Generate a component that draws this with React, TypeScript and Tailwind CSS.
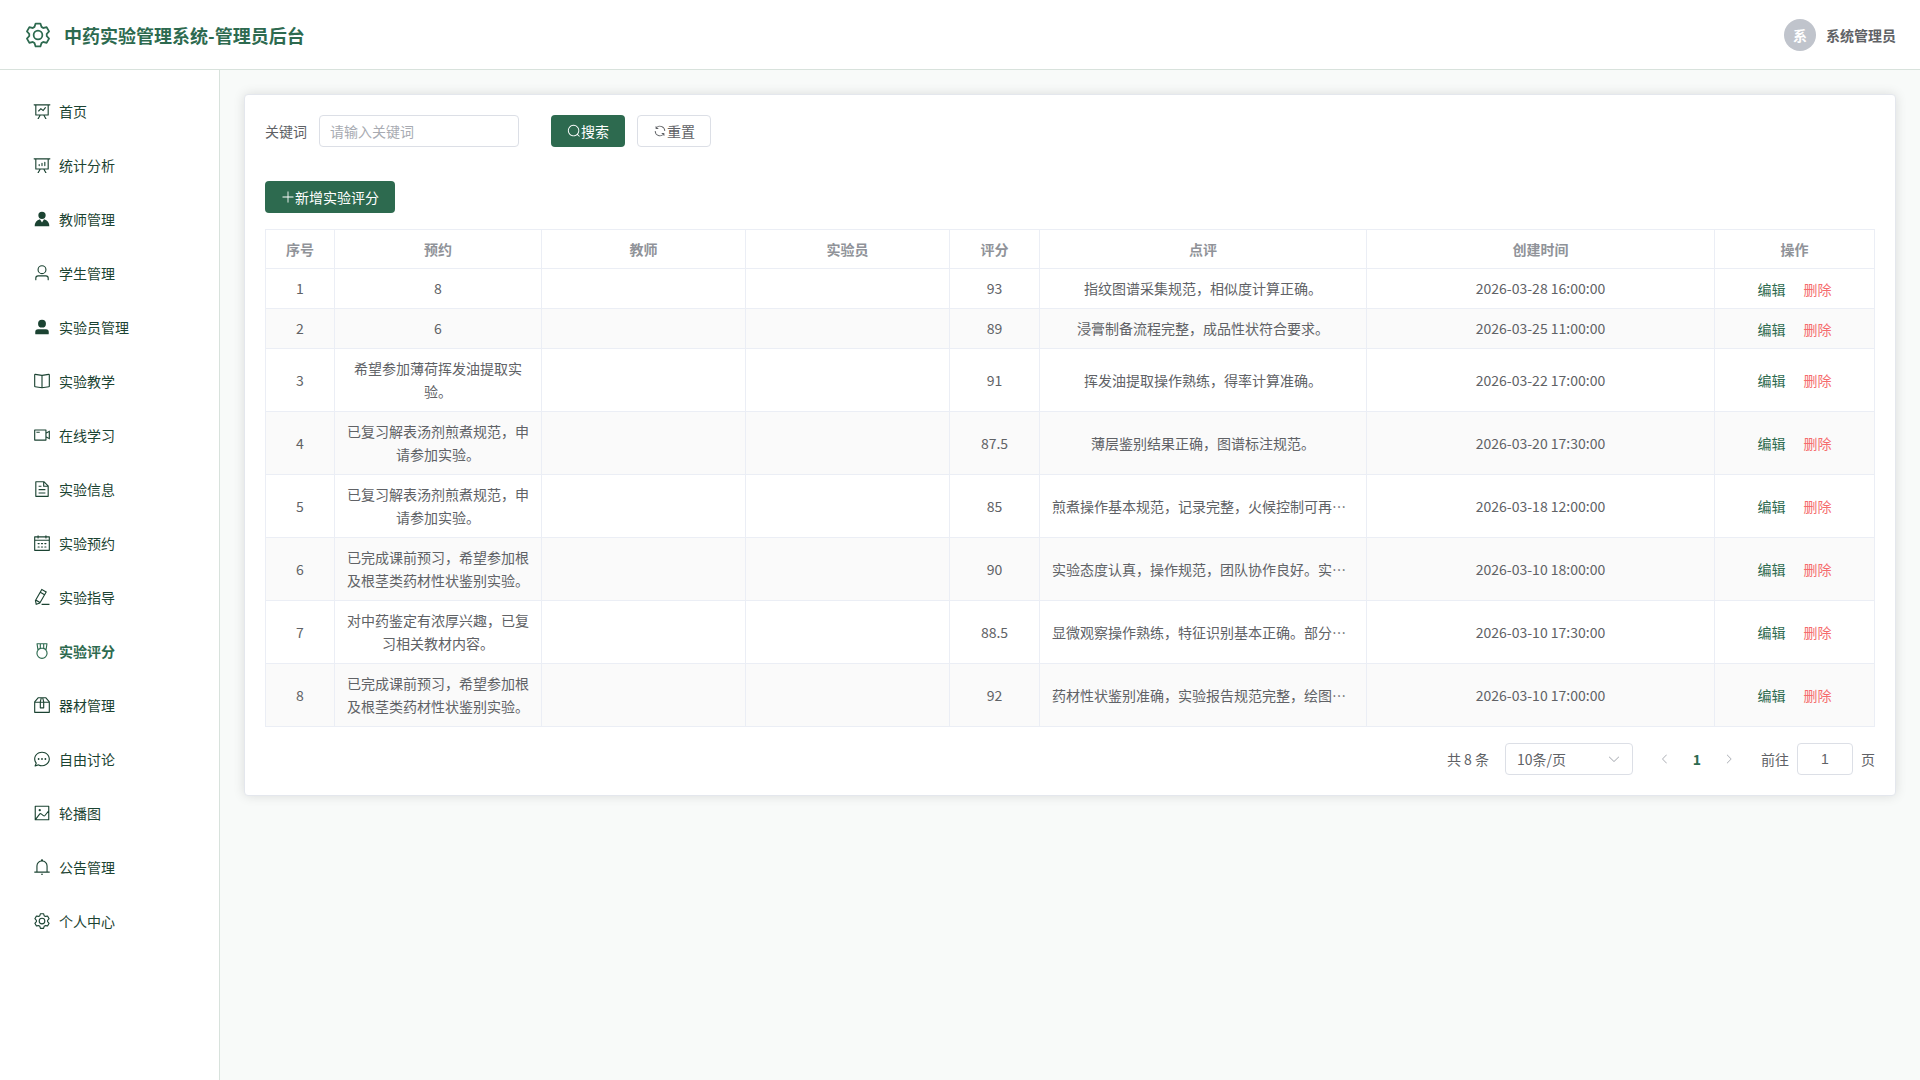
import React from "react";

const icons = {
  dataLine:
    "M359.168 768H160a32 32 0 0 1-32-32V192H64a32 32 0 0 1 0-64h896a32 32 0 1 1 0 64h-64v544a32 32 0 0 1-32 32H665.216l110.848 192h-73.856L591.36 768H433.024L322.176 960H248.32zM832 192H192v512h640zM342.656 534.656a32 32 0 1 1-45.312-45.312L444.992 341.76l125.44 94.08L679.04 300.032a32 32 0 1 1 49.92 39.936L581.632 524.224 451.008 426.24 342.656 534.592z",
  dataAnalysis:
    "m665.216 768 110.848 192h-73.856L591.36 768H433.024L322.176 960H248.32l110.848-192H160a32 32 0 0 1-32-32V192H64a32 32 0 0 1 0-64h896a32 32 0 1 1 0 64h-64v544a32 32 0 0 1-32 32zM832 192H192v512h640zM352 448a32 32 0 0 1 32 32v64a32 32 0 0 1-64 0v-64a32 32 0 0 1 32-32m160-64a32 32 0 0 1 32 32v128a32 32 0 0 1-64 0V416a32 32 0 0 1 32-32m160-64a32 32 0 0 1 32 32v192a32 32 0 1 1-64 0V352a32 32 0 0 1 32-32",
  avatar:
    "M628.736 528.896A416 416 0 0 1 928 928H96a415.872 415.872 0 0 1 299.264-399.104L512 704zM720 304a208 208 0 1 1-416 0 208 208 0 0 1 416 0",
  user: "M512 512a192 192 0 1 0 0-384 192 192 0 0 0 0 384m0 64a256 256 0 1 1 0-512 256 256 0 0 1 0 512m320 320v-96a96 96 0 0 0-96-96H288a96 96 0 0 0-96 96v96a32 32 0 1 1-64 0v-96a160 160 0 0 1 160-160h448a160 160 0 0 1 160 160v96a32 32 0 1 1-64 0",
  userFilled:
    "M288 320a224 224 0 1 0 448 0 224 224 0 1 0-448 0m544 608H160a32 32 0 0 1-32-32v-96a160 160 0 0 1 160-160h448a160 160 0 0 1 160 160v96a32 32 0 0 1-32 32z",
  reading:
    "m512 863.36 384-54.848v-638.72L525.568 222.72a96 96 0 0 1-27.136 0L128 169.792v638.72zM137.024 106.432l370.432 52.928a32 32 0 0 0 9.088 0l370.432-52.928A64 64 0 0 1 960 169.792v638.72a64 64 0 0 1-54.976 63.36l-388.48 55.488a32 32 0 0 1-9.088 0l-388.48-55.488A64 64 0 0 1 64 808.512v-638.72a64 64 0 0 1 73.024-63.36M480 192h64v704h-64z",
  videoCamera:
    "M704 768V256H128v512zm64-416 192-96v512l-192-96v128a32 32 0 0 1-32 32H96a32 32 0 0 1-32-32V224a32 32 0 0 1 32-32h640a32 32 0 0 1 32 32zm0 71.552v176.896l128 64V359.552zM192 320h192v64H192z",
  document:
    "M832 384H576V128H192v768h640zm-26.496-64L640 154.496V320zM160 64h480l256 256v608a32 32 0 0 1-32 32H160a32 32 0 0 1-32-32V96a32 32 0 0 1 32-32m160 448h384v64H320zm0-192h160v64H320zm0 384h384v64H320z",
  calendar:
    "M128 384v512h768V192H768v32a32 32 0 1 1-64 0v-32H320v32a32 32 0 0 1-64 0v-32H128v128h768v64zm192-256h384V96a32 32 0 1 1 64 0v32h160a32 32 0 0 1 32 32v768a32 32 0 0 1-32 32H96a32 32 0 0 1-32-32V160a32 32 0 0 1 32-32h160V96a32 32 0 0 1 64 0zm-32 384h64a32 32 0 0 1 0 64h-64a32 32 0 0 1 0-64m0 192h64a32 32 0 1 1 0 64h-64a32 32 0 1 1 0-64m192-192h64a32 32 0 0 1 0 64h-64a32 32 0 0 1 0-64m0 192h64a32 32 0 1 1 0 64h-64a32 32 0 1 1 0-64m192-192h64a32 32 0 1 1 0 64h-64a32 32 0 1 1 0-64m0 192h64a32 32 0 1 1 0 64h-64a32 32 0 1 1 0-64",
  editPen:
    "m199.04 672.64 193.984 112 224-387.968-193.92-112-224 388.032zm-23.872 60.16 32.896 148.288 144.896-45.696zM455.04 229.248l193.92 112 56.704-98.112-193.984-112zM104.32 708.8l384-665.024 304.768 175.936L409.152 884.8h.064l-248.448 78.336zm384 254.272v-64h448v64z",
  medal:
    "M512 896a256 256 0 1 0 0-512 256 256 0 0 0 0 512m0 64a320 320 0 1 1 0-640 320 320 0 0 1 0 640M576 128H448v200a286.72 286.72 0 0 1 64-8c19.52 0 40.832 2.688 64 8zm64 0v219.648c24.448 9.088 50.56 20.416 78.4 33.92L757.44 128zm-256 0H266.624l39.04 253.568c27.84-13.504 53.888-24.832 78.336-33.92V128zM229.312 64h565.376a32 32 0 0 1 31.616 36.864L768 480c-113.792-64-199.104-96-256-96-56.896 0-142.208 32-256 96l-58.304-379.136A32 32 0 0 1 229.312 64",
  box: "M317.056 128 128 344.064V896h768V344.064L706.944 128zm-14.528-64h418.944a32 32 0 0 1 24.064 10.88l206.528 236.096A32 32 0 0 1 960 332.032V928a32 32 0 0 1-32 32H96a32 32 0 0 1-32-32V332.032a32 32 0 0 1 7.936-21.12L278.4 75.008A32 32 0 0 1 302.528 64M64 320h896v64H64zM448 327.872V640h128V327.872L526.08 128h-28.16zM448 64h128l64 256v352a32 32 0 0 1-32 32H416a32 32 0 0 1-32-32V320z",
  chat: "m174.72 855.68 135.296-45.12 23.68 11.84C388.096 849.536 448.576 864 512 864c211.84 0 384-166.784 384-352S723.84 160 512 160 128 326.784 128 512c0 69.12 24.96 139.264 70.848 199.232l22.08 28.8-46.272 115.584zm-45.248 82.56A32 32 0 0 1 89.6 896l58.368-145.92C94.72 680.32 64 596.864 64 512 64 299.904 256 96 512 96s448 203.904 448 416-192 416-448 416a461.056 461.056 0 0 1-206.912-48.384l-175.616 58.56zM512 563.2a51.2 51.2 0 1 1 0-102.4 51.2 51.2 0 0 1 0 102.4m192 0a51.2 51.2 0 1 1 0-102.4 51.2 51.2 0 0 1 0 102.4m-384 0a51.2 51.2 0 1 1 0-102.4 51.2 51.2 0 0 1 0 102.4",
  picture:
    "M160 160v704h704V160zm-32-64h768a32 32 0 0 1 32 32v768a32 32 0 0 1-32 32H128a32 32 0 0 1-32-32V128a32 32 0 0 1 32-32M384 288q64 0 64 64t-64 64q-64 0-64-64t64-64M185.408 876.992l-50.816-38.912L350.72 556.032a96 96 0 0 1 134.592-17.856l1.856 1.472 122.88 99.136a32 32 0 0 0 44.992-4.864l216-269.888 49.92 39.936-215.808 269.824-.256.32a96 96 0 0 1-135.04 14.464l-122.88-99.072-.64-.512a32 32 0 0 0-44.8 5.952z",
  bell: "M512 64a64 64 0 0 1 64 64v64H448v-64a64 64 0 0 1 64-64M256 768h512V448a256 256 0 1 0-512 0zm256-640a320 320 0 0 1 320 320v384H192V448a320 320 0 0 1 320-320M96 768h832q32 0 32 32t-32 32H96q-32 0-32-32t32-32m352 128h128a64 64 0 0 1-128 0",
  setting:
    "M600.704 64a32 32 0 0 1 30.464 22.208l35.2 109.376c14.784 7.232 28.928 15.36 42.432 24.512l112.384-24.192a32 32 0 0 1 34.432 15.36L944.32 364.8a32 32 0 0 1-4.032 37.504l-77.12 85.12a357.12 357.12 0 0 1 0 49.024l77.12 85.248a32 32 0 0 1 4.032 37.504l-88.704 153.6a32 32 0 0 1-34.432 15.296L708.8 803.904c-13.44 9.088-27.648 17.28-42.368 24.512l-35.264 109.376A32 32 0 0 1 600.704 960H423.296a32 32 0 0 1-30.464-22.208L357.696 828.48a351.616 351.616 0 0 1-42.56-24.64l-112.32 24.256a32 32 0 0 1-34.432-15.36L79.68 659.2a32 32 0 0 1 4.032-37.504l77.12-85.248a357.12 357.12 0 0 1 0-48.896l-77.12-85.248A32 32 0 0 1 79.68 364.8l88.704-153.6a32 32 0 0 1 34.432-15.296l112.32 24.256c13.568-9.152 27.776-17.408 42.56-24.64l35.2-109.312A32 32 0 0 1 423.232 64H600.64zm-23.424 64H446.72l-36.352 113.088-24.512 11.968a294.113 294.113 0 0 0-34.816 20.096l-22.656 15.36-116.224-25.088-65.28 113.152 79.68 88.192-1.92 27.136a293.12 293.12 0 0 0 0 40.192l1.92 27.136-79.808 88.192 65.344 113.152 116.224-25.024 22.656 15.296a294.113 294.113 0 0 0 34.816 20.096l24.512 11.968L446.72 896h130.688l36.48-113.152 24.448-11.904a288.282 288.282 0 0 0 34.752-20.096l22.592-15.296 116.288 25.024 65.28-113.152-79.744-88.192 1.92-27.136a293.12 293.12 0 0 0 0-40.256l-1.92-27.136 79.808-88.128-65.344-113.152-116.288 24.96-22.592-15.232a287.616 287.616 0 0 0-34.752-20.096l-24.448-11.904L577.344 128zM512 320a192 192 0 1 1 0 384 192 192 0 0 1 0-384m0 64a128 128 0 1 0 0 256 128 128 0 0 0 0-256",
  search:
    "m795.904 750.72 124.992 124.928a32 32 0 0 1-45.248 45.248L750.656 795.904a416 416 0 1 1 45.248-45.248zM480 832a352 352 0 1 0 0-704 352 352 0 0 0 0 704",
  refresh:
    "M771.776 794.88A384 384 0 0 1 128 512h64a320 320 0 0 0 555.712 216.448H654.72a32 32 0 1 1 0-64h149.056a32 32 0 0 1 32 32v148.928a32 32 0 1 1-64 0v-50.56zM276.288 295.616h92.992a32 32 0 0 1 0 64H220.16a32 32 0 0 1-32-32V178.56a32 32 0 0 1 64 0v50.56A384 384 0 0 1 896.128 512h-64a320 320 0 0 0-555.776-216.384z",
  plus: "M480 480V128a32 32 0 0 1 64 0v352h352a32 32 0 1 1 0 64H544v352a32 32 0 1 1-64 0V544H128a32 32 0 0 1 0-64z",
  arrowDown:
    "M831.872 340.864 512 652.672 192.128 340.864a30.592 30.592 0 0 0-42.752 0 29.12 29.12 0 0 0 0 41.6L489.664 714.24a32 32 0 0 0 44.672 0l340.288-331.712a29.12 29.12 0 0 0 0-41.728 30.592 30.592 0 0 0-42.752 0z",
  arrowLeft:
    "M609.408 149.376 277.76 489.6a32 32 0 0 0 0 44.672l331.648 340.352a29.12 29.12 0 0 0 41.728 0 30.592 30.592 0 0 0 0-42.752L339.264 511.936l311.872-319.872a30.592 30.592 0 0 0 0-42.688 29.12 29.12 0 0 0-41.728 0z",
  arrowRight:
    "M340.864 149.312a30.592 30.592 0 0 0 0 42.752L652.736 512 340.864 831.872a30.592 30.592 0 0 0 0 42.752 29.12 29.12 0 0 0 41.728 0L714.24 534.336a32 32 0 0 0 0-44.672L382.592 149.376a29.12 29.12 0 0 0-41.728 0z",
};

type IconName = keyof typeof icons;

const Icon = ({ name, className }: { name: IconName; className: string }) => (
  <svg viewBox="0 0 1024 1024" fill="currentColor" className={className} aria-hidden="true">
    <path d={icons[name]} />
  </svg>
);

const menu: { label: string; icon: IconName }[] = [
  { label: "首页", icon: "dataLine" },
  { label: "统计分析", icon: "dataAnalysis" },
  { label: "教师管理", icon: "avatar" },
  { label: "学生管理", icon: "user" },
  { label: "实验员管理", icon: "userFilled" },
  { label: "实验教学", icon: "reading" },
  { label: "在线学习", icon: "videoCamera" },
  { label: "实验信息", icon: "document" },
  { label: "实验预约", icon: "calendar" },
  { label: "实验指导", icon: "editPen" },
  { label: "实验评分", icon: "medal" },
  { label: "器材管理", icon: "box" },
  { label: "自由讨论", icon: "chat" },
  { label: "轮播图", icon: "picture" },
  { label: "公告管理", icon: "bell" },
  { label: "个人中心", icon: "setting" },
];

const rows = [
  { booking: "8", score: "93", comment: "指纹图谱采集规范，相似度计算正确。", time: "2026-03-28 16:00:00" },
  { booking: "6", score: "89", comment: "浸膏制备流程完整，成品性状符合要求。", time: "2026-03-25 11:00:00" },
  { booking: "希望参加薄荷挥发油提取实验。", score: "91", comment: "挥发油提取操作熟练，得率计算准确。", time: "2026-03-22 17:00:00" },
  { booking: "已复习解表汤剂煎煮规范，申请参加实验。", score: "87.5", comment: "薄层鉴别结果正确，图谱标注规范。", time: "2026-03-20 17:30:00" },
  { booking: "已复习解表汤剂煎煮规范，申请参加实验。", score: "85", comment: "煎煮操作基本规范，记录完整，火候控制可再精细。", time: "2026-03-18 12:00:00" },
  { booking: "已完成课前预习，希望参加根及根茎类药材性状鉴别实验。", score: "90", comment: "实验态度认真，操作规范，团队协作良好。实验记录完整。", time: "2026-03-10 18:00:00" },
  { booking: "对中药鉴定有浓厚兴趣，已复习相关教材内容。", score: "88.5", comment: "显微观察操作熟练，特征识别基本正确。部分描述需完善。", time: "2026-03-10 17:30:00" },
  { booking: "已完成课前预习，希望参加根及根茎类药材性状鉴别实验。", score: "92", comment: "药材性状鉴别准确，实验报告规范完整，绘图清晰。", time: "2026-03-10 17:00:00" },
];

const columns = ["序号", "预约", "教师", "实验员", "评分", "点评", "创建时间", "操作"];

const cell = "border-r border-b border-[#ebeef5] px-3 py-2";

const App: React.FC = () => {
  return (
    <div className="flex flex-col min-h-screen bg-[#f8faf9] text-sm text-[#606266] font-['Noto_Sans_CJK_SC',sans-serif]">
      {/* Header */}
      <header className="flex items-center justify-between h-[70px] px-6 bg-white border-b border-[#d8e2dc]">
        <div className="flex items-center gap-3 text-[#2d6a4f]">
          <Icon name="setting" className="w-7 h-7" />
          <h1 className="text-lg font-bold">中药实验管理系统-管理员后台</h1>
        </div>
        <div className="flex items-center gap-[10px] font-bold">
          <span className="flex items-center justify-center w-8 h-8 rounded-full bg-[#c0c4cc] text-white">
            系
          </span>
          <span>系统管理员</span>
        </div>
      </header>

      <div className="flex flex-1">
        {/* Sidebar */}
        <nav className="w-[220px] shrink-0 bg-white border-r border-[#d8e2dc] py-[14px]">
          <ul>
            {menu.map((item) => (
              <li key={item.label}>
                <a
                  href="#"
                  className={
                    item.label === "实验评分"
                      ? "flex items-center gap-2 h-[54px] pl-[33px] leading-[54px] font-bold text-[#2d6a4f]"
                      : "flex items-center gap-2 h-[54px] pl-[33px] leading-[54px] text-[#1b4332]"
                  }
                >
                  <Icon name={item.icon} className="w-[18px] h-[18px]" />
                  <span>{item.label}</span>
                </a>
              </li>
            ))}
          </ul>
        </nav>

        {/* Content */}
        <main className="flex-1 min-w-0 p-6">
          <div className="bg-white border border-[#e4e7ed] rounded shadow-[0_0_12px_rgba(0,0,0,0.12)] p-5">
            <form className="flex items-center">
              <label htmlFor="keyword" className="mr-3">
                关键词
              </label>
              <input
                id="keyword"
                type="text"
                placeholder="请输入关键词"
                className="w-[200px] h-8 mr-8 px-[10px] leading-[30px] border border-[#dcdfe6] rounded placeholder:text-[#a8abb2]"
              />
              <button
                type="button"
                className="flex items-center h-8 px-4 mr-3 rounded bg-[#2d6a4f] text-white leading-none"
              >
                <Icon name="search" className="w-[14px] h-[14px]" />
                搜索
              </button>
              <button
                type="button"
                className="flex items-center h-8 px-[15px] rounded border border-[#dcdfe6] leading-none"
              >
                <Icon name="refresh" className="w-[14px] h-[14px]" />
                重置
              </button>
            </form>

            <button
              type="button"
              className="flex items-center h-8 px-4 mt-[34px] mb-4 rounded bg-[#2d6a4f] text-white leading-none"
            >
              <Icon name="plus" className="w-[14px] h-[14px]" />
              新增实验评分
            </button>

            <div className="border-t border-l border-[#ebeef5]">
              <table className="w-full table-fixed border-separate border-spacing-0 text-center leading-[23px]">
                <colgroup>
                  <col className="w-[69px]" />
                  <col className="w-[207px]" />
                  <col className="w-[204px]" />
                  <col className="w-[204px]" />
                  <col className="w-[90px]" />
                  <col className="w-[327px]" />
                  <col className="w-[348px]" />
                  <col className="w-[160px]" />
                </colgroup>
                <thead>
                  <tr className="h-[39px] text-[#909399]">
                    {columns.map((title) => (
                      <th key={title} className="border-r border-b border-[#ebeef5] px-3 leading-[23px]">
                        {title}
                      </th>
                    ))}
                  </tr>
                </thead>
                <tbody>
                  {rows.map((row, index) => (
                    <tr key={index} className="even:bg-[#fafafa]">
                      <td className={cell}>{index + 1}</td>
                      <td className={cell}>{row.booking}</td>
                      <td className={cell}></td>
                      <td className={cell}></td>
                      <td className={cell}>{row.score}</td>
                      <td className={cell}>
                        <div className="truncate">{row.comment}</div>
                      </td>
                      <td className={cell}>{row.time}</td>
                      <td className={cell}>
                        <div className="flex items-center justify-center gap-[18px] h-[23px]">
                          <button type="button" className="leading-6 text-[#2d6a4f]">
                            编辑
                          </button>
                          <button type="button" className="leading-6 text-[#f56c6c]">
                            删除
                          </button>
                        </div>
                      </td>
                    </tr>
                  ))}
                </tbody>
              </table>
            </div>

            {/* Pagination */}
            <div className="flex items-center justify-end gap-4 mt-4">
              <span>共 8 条</span>
              <div className="relative">
                <select
                  aria-label="每页条数"
                  className="block w-32 h-8 pl-[11px] appearance-none border border-[#dcdfe6] rounded bg-white"
                >
                  <option>10条/页</option>
                </select>
                <Icon
                  name="arrowDown"
                  className="absolute right-3 top-[9px] w-[14px] h-[14px] text-[#a8abb2] pointer-events-none"
                />
              </div>
              <div className="flex">
                <button type="button" aria-label="上一页" className="flex items-center justify-center w-8 h-8 text-[#a8abb2]">
                  <Icon name="arrowLeft" className="w-3 h-3" />
                </button>
                <button type="button" className="w-8 h-8 font-bold text-[#2d6a4f]">
                  1
                </button>
                <button type="button" aria-label="下一页" className="flex items-center justify-center w-8 h-8 text-[#a8abb2]">
                  <Icon name="arrowRight" className="w-3 h-3" />
                </button>
              </div>
              <div className="flex items-center gap-2">
                <label htmlFor="page">前往</label>
                <input
                  id="page"
                  type="text"
                  defaultValue="1"
                  className="w-14 h-8 text-center border border-[#dcdfe6] rounded font-['Liberation_Sans',sans-serif]"
                />
                <span>页</span>
              </div>
            </div>
          </div>
        </main>
      </div>
    </div>
  );
};

export default App;
